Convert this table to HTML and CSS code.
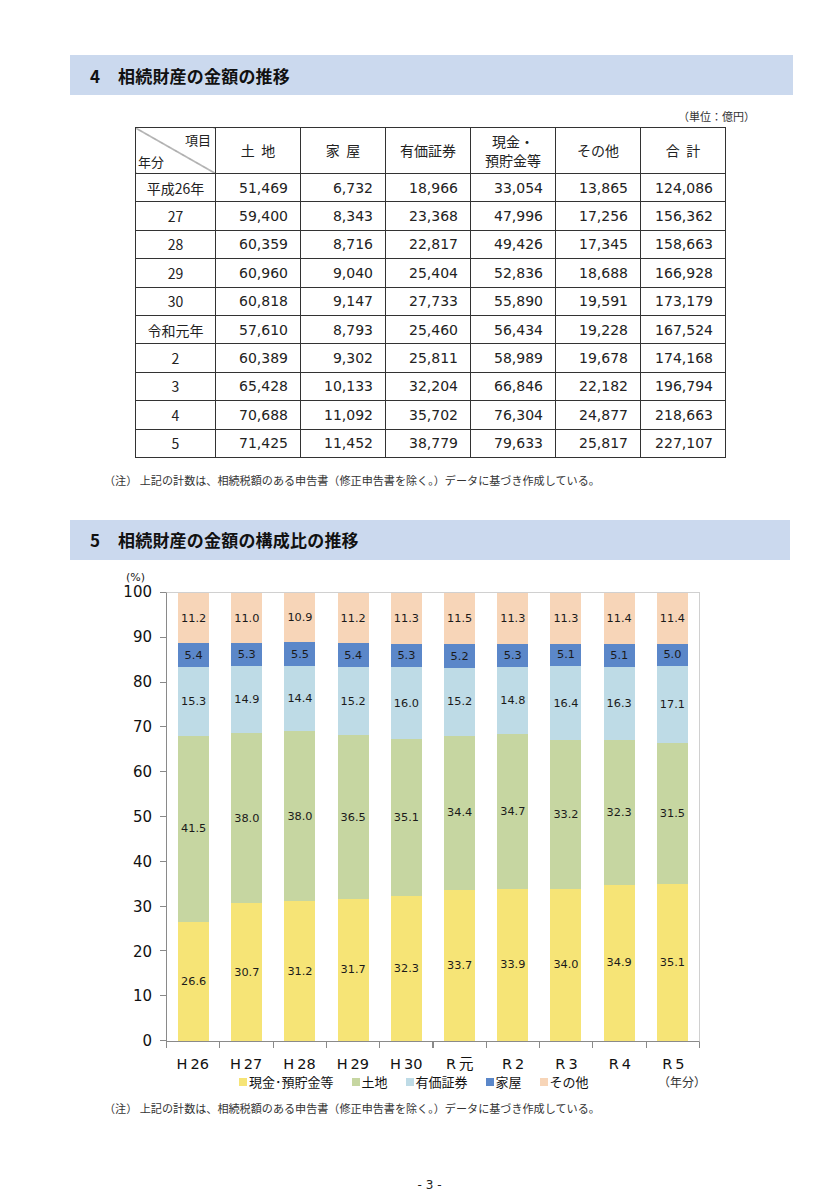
FILE: index.html
```html
<!DOCTYPE html>
<html lang="ja">
<head>
<meta charset="utf-8">
<link rel="stylesheet" href="styles.css">
</head>
<body>
<div class="page">
  <div class="sec-head sec-head-1"><span class="num">4</span>相続財産の金額の推移</div>
  <div class="unit">（単位：億円）</div>
  <table class="tbl">
    <colgroup><col class="c1"><col><col><col><col><col><col></colgroup>
    <thead>
      <tr>
        <th class="diag"><div class="diag-in"><span class="d-top">項目</span><span class="d-bot">年分</span></div></th>
        <th>土&nbsp;&nbsp;地</th>
        <th>家&nbsp;&nbsp;屋</th>
        <th>有価証券</th>
        <th>現金・<br>預貯金等</th>
        <th>その他</th>
        <th>合&nbsp;&nbsp;計</th>
      </tr>
    </thead>
    <tbody>
      <tr><td class="yr">平成26年</td><td>51,469</td><td>6,732</td><td>18,966</td><td>33,054</td><td>13,865</td><td>124,086</td></tr>
      <tr><td class="yr">27</td><td>59,400</td><td>8,343</td><td>23,368</td><td>47,996</td><td>17,256</td><td>156,362</td></tr>
      <tr><td class="yr">28</td><td>60,359</td><td>8,716</td><td>22,817</td><td>49,426</td><td>17,345</td><td>158,663</td></tr>
      <tr><td class="yr">29</td><td>60,960</td><td>9,040</td><td>25,404</td><td>52,836</td><td>18,688</td><td>166,928</td></tr>
      <tr><td class="yr">30</td><td>60,818</td><td>9,147</td><td>27,733</td><td>55,890</td><td>19,591</td><td>173,179</td></tr>
      <tr><td class="yr">令和元年</td><td>57,610</td><td>8,793</td><td>25,460</td><td>56,434</td><td>19,228</td><td>167,524</td></tr>
      <tr><td class="yr">2</td><td>60,389</td><td>9,302</td><td>25,811</td><td>58,989</td><td>19,678</td><td>174,168</td></tr>
      <tr><td class="yr">3</td><td>65,428</td><td>10,133</td><td>32,204</td><td>66,846</td><td>22,182</td><td>196,794</td></tr>
      <tr><td class="yr">4</td><td>70,688</td><td>11,092</td><td>35,702</td><td>76,304</td><td>24,877</td><td>218,663</td></tr>
      <tr><td class="yr">5</td><td>71,425</td><td>11,452</td><td>38,779</td><td>79,633</td><td>25,817</td><td>227,107</td></tr>
    </tbody>
  </table>
  <p class="note note-1">（注）&nbsp;上記の計数は、相続税額のある申告書（修正申告書を除く。）データに基づき作成している。</p>

  <div class="sec-head sec-head-2"><span class="num">5</span>相続財産の金額の構成比の推移</div>

  <div class="chart">
    <div class="pct">(%)</div>
    <div class="chart-row">
      <div class="ylabels">
        <span>100</span><span>90</span><span>80</span><span>70</span><span>60</span><span>50</span><span>40</span><span>30</span><span>20</span><span>10</span><span>0</span>
      </div>
      <div class="yticks"></div>
      <div class="plot-wrap">
        <div class="plot">
          <div class="bar"><div class="seg s1" style="height:26.6%"><span>26.6</span></div><div class="seg s2" style="height:41.5%"><span>41.5</span></div><div class="seg s3" style="height:15.3%"><span>15.3</span></div><div class="seg s4" style="height:5.4%"><span>5.4</span></div><div class="seg s5" style="height:11.2%"><span>11.2</span></div></div>
          <div class="bar"><div class="seg s1" style="height:30.7%"><span>30.7</span></div><div class="seg s2" style="height:38.0%"><span>38.0</span></div><div class="seg s3" style="height:14.9%"><span>14.9</span></div><div class="seg s4" style="height:5.3%"><span>5.3</span></div><div class="seg s5" style="height:11.0%"><span>11.0</span></div></div>
          <div class="bar"><div class="seg s1" style="height:31.2%"><span>31.2</span></div><div class="seg s2" style="height:38.0%"><span>38.0</span></div><div class="seg s3" style="height:14.4%"><span>14.4</span></div><div class="seg s4" style="height:5.5%"><span>5.5</span></div><div class="seg s5" style="height:10.9%"><span>10.9</span></div></div>
          <div class="bar"><div class="seg s1" style="height:31.7%"><span>31.7</span></div><div class="seg s2" style="height:36.5%"><span>36.5</span></div><div class="seg s3" style="height:15.2%"><span>15.2</span></div><div class="seg s4" style="height:5.4%"><span>5.4</span></div><div class="seg s5" style="height:11.2%"><span>11.2</span></div></div>
          <div class="bar"><div class="seg s1" style="height:32.3%"><span>32.3</span></div><div class="seg s2" style="height:35.1%"><span>35.1</span></div><div class="seg s3" style="height:16.0%"><span>16.0</span></div><div class="seg s4" style="height:5.3%"><span>5.3</span></div><div class="seg s5" style="height:11.3%"><span>11.3</span></div></div>
          <div class="bar"><div class="seg s1" style="height:33.7%"><span>33.7</span></div><div class="seg s2" style="height:34.4%"><span>34.4</span></div><div class="seg s3" style="height:15.2%"><span>15.2</span></div><div class="seg s4" style="height:5.2%"><span>5.2</span></div><div class="seg s5" style="height:11.5%"><span>11.5</span></div></div>
          <div class="bar"><div class="seg s1" style="height:33.9%"><span>33.9</span></div><div class="seg s2" style="height:34.7%"><span>34.7</span></div><div class="seg s3" style="height:14.8%"><span>14.8</span></div><div class="seg s4" style="height:5.3%"><span>5.3</span></div><div class="seg s5" style="height:11.3%"><span>11.3</span></div></div>
          <div class="bar"><div class="seg s1" style="height:34.0%"><span>34.0</span></div><div class="seg s2" style="height:33.2%"><span>33.2</span></div><div class="seg s3" style="height:16.4%"><span>16.4</span></div><div class="seg s4" style="height:5.1%"><span>5.1</span></div><div class="seg s5" style="height:11.3%"><span>11.3</span></div></div>
          <div class="bar"><div class="seg s1" style="height:34.9%"><span>34.9</span></div><div class="seg s2" style="height:32.3%"><span>32.3</span></div><div class="seg s3" style="height:16.3%"><span>16.3</span></div><div class="seg s4" style="height:5.1%"><span>5.1</span></div><div class="seg s5" style="height:11.4%"><span>11.4</span></div></div>
          <div class="bar"><div class="seg s1" style="height:35.1%"><span>35.1</span></div><div class="seg s2" style="height:31.5%"><span>31.5</span></div><div class="seg s3" style="height:17.1%"><span>17.1</span></div><div class="seg s4" style="height:5.0%"><span>5.0</span></div><div class="seg s5" style="height:11.3%"><span>11.4</span></div></div>
        </div>
        <div class="xticks"></div>
        <div class="xlabels">
          <span><i>H</i>26</span><span><i>H</i>27</span><span><i>H</i>28</span><span><i>H</i>29</span><span><i>H</i>30</span><span><i>R</i>元</span><span><i>R</i>2</span><span><i>R</i>3</span><span><i>R</i>4</span><span><i>R</i>5</span>
        </div>
        <div class="legend">
          <span class="lg"><b class="sw s1"></b>現金･預貯金等</span>
          <span class="lg"><b class="sw s2"></b>土地</span>
          <span class="lg"><b class="sw s3"></b>有価証券</span>
          <span class="lg"><b class="sw s4"></b>家屋</span>
          <span class="lg"><b class="sw s5"></b>その他</span>
          <span class="nenbun">（年分）</span>
        </div>
      </div>
    </div>
  </div>
  <p class="note note-2">（注）&nbsp;上記の計数は、相続税額のある申告書（修正申告書を除く。）データに基づき作成している。</p>

  <div class="pageno">- 3 -</div>
</div>
</body>
</html>
```

FILE: styles.css
```css
* { box-sizing: border-box; }
html, body { margin: 0; padding: 0; background: #fff; }
body {
  font-family: "Noto Sans CJK JP", "DejaVu Sans", sans-serif;
  color: #222;
}
.page {
  width: 839px;
  padding-top: 55px;
}
.sec-head {
  background: #cbd9ee;
  height: 40px;
  display: flex;
  align-items: center;
  padding-left: 20px;
  font-weight: 700;
  font-size: 17px;
  color: #111;
  letter-spacing: 0.2px;
}
.sec-head .num { width: 28px; display: inline-block; }
.sec-head-1 { margin: 0 46px 0 70px; }
.sec-head-2 { margin: 0 49px 0 70px; }

.unit {
  font-size: 11px;
  text-align: right;
  margin: 13px 84px 0 0;
  line-height: 16px;
  color: #333;
}
.tbl {
  margin: 3px 0 0 135px;
  width: 591px;
  border-collapse: collapse;
  table-layout: fixed;
  font-size: 14px;
}
.tbl col.c1 { width: 80px; }
.tbl th, .tbl td {
  border: 1px solid #333;
  padding: 0;
}
.tbl th {
  height: 46px;
  font-weight: 400;
  font-size: 14px;
  line-height: 19px;
  text-align: center;
}
.tbl td {
  height: 28.4px;
  font-family: "DejaVu Sans", sans-serif;
  font-size: 14px;
  text-align: right;
  padding-right: 12px;
}
.tbl td.yr {
  font-family: "Noto Sans CJK JP", sans-serif;
  text-align: center;
  padding-right: 0;
}
.tbl th.diag {
  background: linear-gradient(to top right, transparent calc(50% - 0.7px), #444 50%, transparent calc(50% + 0.7px));
}
.diag-in {
  height: 44px;
  display: flex;
  flex-direction: column;
  justify-content: space-between;
  padding: 2px 4px 2px 2px;
  font-size: 13px;
  line-height: 18px;
}
.d-top { align-self: flex-end; }
.d-bot { align-self: flex-start; }

.note {
  margin: 0;
  font-size: 11.1px;
  line-height: 16px;
  color: #333;
  padding-left: 104px;
}
.note-1 { margin-top: 14px; margin-bottom: 32px; }

.chart { margin-top: 12px; }
.pct {
  font-family: "DejaVu Sans", sans-serif;
  font-size: 11px;
  margin-left: 126px;
  line-height: 12px;
  height: 20px;
}
.chart-row {
  display: flex;
  align-items: flex-start;
  margin-left: 108px;
}
.ylabels {
  width: 44px;
  height: 450px;
  display: flex;
  flex-direction: column;
  justify-content: space-between;
  padding: 0.5px 0;
  font-family: "DejaVu Sans", sans-serif;
  font-size: 15px;
  color: #111;
  margin-right: 8px;
}
.ylabels span {
  height: 0;
  display: flex;
  align-items: center;
  justify-content: flex-end;
}
.yticks {
  width: 6px;
  height: 450px;
  background: repeating-linear-gradient(to bottom, #8a8a8a 0 1px, transparent 1px 44.8px);
}
.plot-wrap { width: 560px; }
.plot {
  width: 534px;
  height: 450px;
  border-left: 1px solid #8a8a8a;
  border-bottom: 1px solid #8a8a8a;
  border-top: 1px solid #d0d0d0;
  border-right: 1px solid #d0d0d0;
  display: grid;
  grid-template-columns: repeat(10, 1fr);
}
.bar {
  width: 31px;
  justify-self: center;
  height: 100%;
  display: flex;
  flex-direction: column-reverse;
  overflow: hidden;
}
.seg {
  flex: none;
  display: flex;
  align-items: center;
  justify-content: center;
  font-family: "DejaVu Sans", sans-serif;
  font-size: 11.3px;
  color: #1a1a1a;
  white-space: nowrap;
}
.s1 { background: #f6e476; }
.s2 { background: #c6d6a1; }
.s3 { background: #bedbe6; }
.s4 { background: #5b87c9; }
.s5 { background: #f7d5b8; }

.xticks {
  width: 534px;
  height: 6px;
  background: repeating-linear-gradient(to right, #8a8a8a 0 1px, transparent 1px 53.3px);
}
.xlabels {
  width: 534px;
  display: grid;
  grid-template-columns: repeat(10, 1fr);
  margin-top: 7px;
  font-family: "DejaVu Sans", "Noto Sans CJK JP", sans-serif;
  font-size: 14.5px;
  line-height: 18px;
  color: #111;
}
.xlabels span { text-align: center; }
.xlabels i { font-style: normal; margin-right: 3px; }

.legend {
  display: flex;
  align-items: center;
  width: 540px;
  padding-left: 73px;
  margin-top: 0;
  font-size: 13px;
  line-height: 18px;
  color: #111;
}
.lg { display: flex; align-items: center; margin-right: 18px; }
.sw { width: 8px; height: 8px; display: inline-block; margin-right: 2px; }
.nenbun { margin-left: auto; font-size: 12px; color: #333; }

.note-2 { margin-top: 9px; }

.pageno {
  margin-top: 62px;
  text-align: center;
  font-size: 12px;
  font-family: "DejaVu Sans", sans-serif;
  padding-left: 20px;
  color: #222;
}
```
